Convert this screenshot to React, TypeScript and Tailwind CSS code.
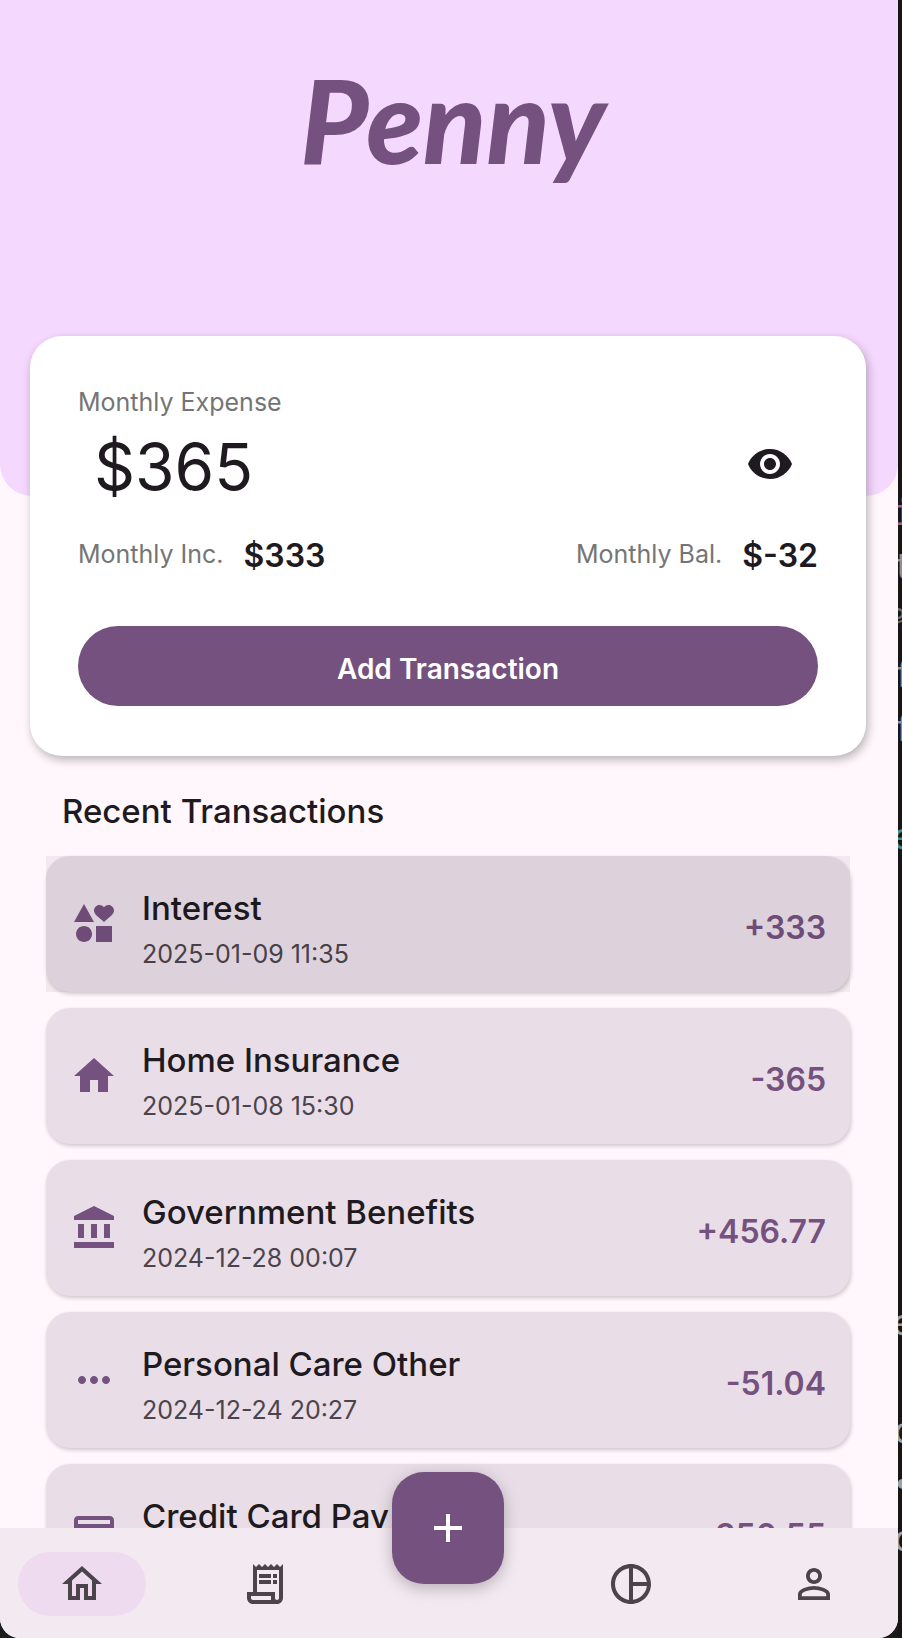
import type { ReactNode } from "react";
import {
  MdAdd,
  MdCreditCard,
  MdHome,
  MdInterests,
  MdMoreHoriz,
  MdOutlineHome,
  MdOutlineReceiptLong,
  MdPersonOutline,
  MdPieChartOutline,
  MdVisibility,
} from "react-icons/md";

type Transaction = {
  title: string;
  date?: string;
  amount: string;
  icon: ReactNode;
  pressed?: boolean;
};

function BankIcon() {
  return (
    <svg viewBox="0 0 24 24" fill="currentColor" className="size-12">
      <path d="M4 10h3v7H4zM10.5 10h3v7h-3zM17 10h3v7h-3zM2 19h20v3H2zM12 1 2 6v2h20V6z" />
    </svg>
  );
}

const transactions: Transaction[] = [
  { title: "Interest", date: "2025-01-09 11:35", amount: "+333", icon: <MdInterests className="size-12" />, pressed: true },
  { title: "Home Insurance", date: "2025-01-08 15:30", amount: "-365", icon: <MdHome className="size-12" /> },
  { title: "Government Benefits", date: "2024-12-28 00:07", amount: "+456.77", icon: <BankIcon /> },
  { title: "Personal Care Other", date: "2024-12-24 20:27", amount: "-51.04", icon: <MdMoreHoriz className="size-12" /> },
  { title: "Credit Card Pay", amount: "-350.55", icon: <MdCreditCard className="size-12" /> },
];

const editorLines = [
  { text: "i", tone: "text-[#a5628f]" },
  { text: "t", tone: "text-[#8f8f8f]" },
  { text: "%", tone: "text-[#6a6a6a]" },
  { text: "f", tone: "text-[#8f8f8f]" },
  { text: "f", tone: "text-[#8f8f8f]" },
  { text: "", tone: "" },
  { text: "e", tone: "text-[#3f8f9b]" },
  { text: "", tone: "" },
  { text: "", tone: "" },
  { text: "", tone: "" },
  { text: "", tone: "" },
  { text: "", tone: "" },
  { text: "", tone: "" },
  { text: "", tone: "" },
  { text: "", tone: "" },
  { text: "e", tone: "text-[#a0a0a0]" },
  { text: "", tone: "" },
  { text: "c", tone: "text-[#a0a0a0]" },
  { text: "•", tone: "text-[#a0a0a0]" },
  { text: "c", tone: "text-[#a0a0a0]" },
];

function SummaryItem({ label, value }: { label: string; value: string }) {
  return (
    <div className="flex items-center gap-5">
      <dt className="text-[25px] leading-8 text-[#757575]">{label}</dt>
      <dd className="pt-1 text-[32px] leading-10 font-semibold">{value}</dd>
    </div>
  );
}

function TransactionCard({ title, date, amount, icon, pressed }: Transaction) {
  return (
    <li className="relative flex h-[136px] shrink-0 items-center gap-6 rounded-3xl bg-[#e9dee7] px-6 shadow-[1px_2px_4px_rgba(0,0,0,0.2)]">
      <span className="text-[#74517e]">{icon}</span>
      <div className="flex min-w-0 flex-1 flex-col gap-2 pt-3">
        <h3 className="truncate text-[33px] leading-10 font-medium">{title}</h3>
        <time className="h-9 text-[25px] leading-9 text-[#4b444c]">{date}</time>
      </div>
      <span className="pt-2 text-[32px] leading-10 font-semibold text-[#74517e]">{amount}</span>
      {pressed && <span className="absolute inset-0 bg-black/5" />}
    </li>
  );
}

function NavItem({ label, active, children }: { label: string; active?: boolean; children: ReactNode }) {
  return (
    <a
      href="#"
      aria-label={label}
      className={
        active
          ? "flex h-16 w-32 items-center justify-center rounded-full bg-[#eedbef] text-[#4b444c]"
          : "flex h-16 w-32 items-center justify-center rounded-full text-[#4b444c]"
      }
    >
      {children}
    </a>
  );
}

export default function App() {
  return (
    <div className="flex h-screen overflow-hidden bg-[#1b1b1b] font-['Inter',sans-serif] text-[#1e1a20]">
      <div className="flex min-w-0 flex-1 flex-col overflow-hidden rounded-b-[20px] bg-[#fff7fc]">
        <main className="min-h-0 flex-1 overflow-y-auto [scrollbar-width:none]">
          <header className="flex h-[496px] justify-center rounded-b-[32px] bg-[#f5d8fd] pt-10 pl-2">
            <h1 className="text-[116px] leading-[160px] font-black text-[#74517e] italic font-[Lato,sans-serif]">
              Penny
            </h1>
          </header>

          <section className="relative -mt-40 mr-8 ml-[30px] rounded-[32px] bg-white px-12 py-[50px] shadow-[2px_4px_10px_rgba(0,0,0,0.28)]">
            <h2 className="text-[25px] leading-8 text-[#757575]">Monthly Expense</h2>
            <div className="flex h-24 items-center justify-between pr-6 pl-4">
              <p className="pt-0.5 text-[64px]">$365</p>
              <button type="button" aria-label="Hide amounts" className="mb-1">
                <MdVisibility className="size-12" />
              </button>
            </div>
            <dl className="flex h-20 items-center justify-between">
              <SummaryItem label="Monthly Inc." value="$333" />
              <SummaryItem label="Monthly Bal." value="$-32" />
            </dl>
            <button
              type="button"
              className="mt-8 flex h-20 w-full items-center justify-center rounded-full bg-[#74517e] pt-1.5 text-[28px] font-semibold text-white"
            >
              Add Transaction
            </button>
          </section>

          <h2 className="flex h-[100px] items-center pt-3 pl-[62px] text-[33px] font-medium">Recent Transactions</h2>

          <ul className="mr-12 ml-[46px] flex flex-col gap-4">
            {transactions.map((item) => (
              <TransactionCard key={item.title} {...item} />
            ))}
          </ul>
        </main>

        <nav className="relative flex justify-between bg-[#f3e9f1] pt-6 pr-5 pb-[22px] pl-[18px]">
          <NavItem label="Home" active>
            <MdOutlineHome className="size-12" />
          </NavItem>
          <NavItem label="Transactions">
            <MdOutlineReceiptLong className="size-12" />
          </NavItem>
          <div className="flex w-32 justify-center">
            <button
              type="button"
              aria-label="Add"
              className="absolute -top-14 flex size-28 items-center justify-center rounded-[32px] bg-[#74517e] text-white shadow-[0_4px_16px_rgba(0,0,0,0.25)]"
            >
              <MdAdd className="size-12" />
            </button>
          </div>
          <NavItem label="Reports">
            <MdPieChartOutline className="size-12" />
          </NavItem>
          <NavItem label="Profile">
            <MdPersonOutline className="size-12" />
          </NavItem>
        </nav>
      </div>

      <aside
        aria-hidden="true"
        className="w-1 shrink-0 overflow-hidden bg-[#171615] pt-[486px] font-['DejaVu_Sans_Mono',monospace] text-[36px]"
      >
        {editorLines.map((line, index) => (
          <div key={index} className={`-ml-1.5 h-[54px] leading-[54px] ${line.tone}`}>
            {line.text}
          </div>
        ))}
      </aside>
    </div>
  );
}
